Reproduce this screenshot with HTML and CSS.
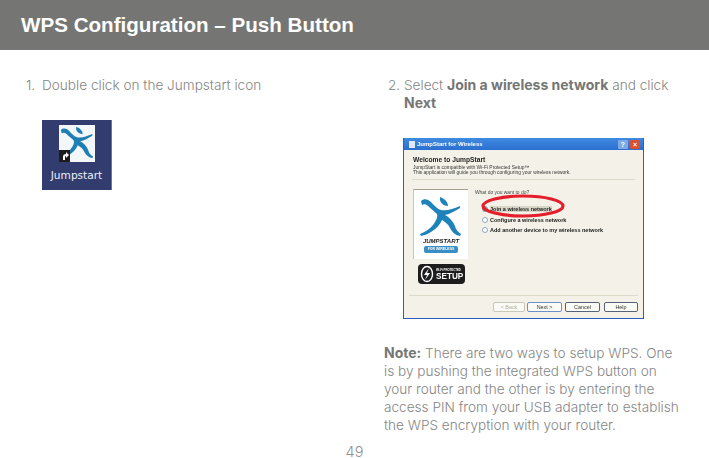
FILE: index.html
```html
<!DOCTYPE html>
<html lang="en">
<head>
    <meta charset="UTF-8">
    <title>WPS Configuration - Push Button</title>
    <link rel="stylesheet" href="styles.css">
</head>
<body>
    <svg class="defs" width="0" height="0">
        <symbol id="runner" viewBox="0 0 42 41">
            <path d="M20 1C23 2 28 5 28 10C24 10 19 7 20 1Z"/>
            <path d="M1 5C4 2 8 3 11 6C14 9 17 13 21 14C27 15 33 13 40 10L40 12C35 15 30 18 25 19C29 21 33 25 35 30C36 34 38 36 41 38L40 40C35 39 32 36 30 32C28 28 25 26 22 24C20 29 16 33 11 36C8 38 5 39 1 40L0 38C5 36 10 33 13 29C16 25 18 21 17 18C14 15 11 13 8 10C6 8 4 8 2 9Z"/>
        </symbol>
    </svg>

    <header class="title-bar">
        <h1>WPS Configuration – Push Button</h1>
    </header>

    <main class="columns">
        <section class="col-left">
            <p class="step"><span class="num">1.</span><span>Double click on the Jumpstart icon</span></p>
            <div class="desktop-icon">
                <div class="icon-box">
                    <svg class="runner-small"><use href="#runner"/></svg>
                    <span class="shortcut">
                        <svg viewBox="0 0 10 10" width="10" height="10"><path d="M3 9V6c0-2 1-3 3-3V1l3 3-3 3V5C5 5 5 6 5 9z" fill="#fff"/></svg>
                    </span>
                </div>
                <span class="icon-label">Jumpstart</span>
            </div>
        </section>

        <section class="col-right">
            <p class="step step-two"><span class="num">2.</span><span>Select <b>Join a wireless network</b> and click<br><b>Next</b></span></p>

            <div class="dialog">
                <div class="dlg-title">
                    <span class="dlg-logo"></span>
                    <span class="dlg-name">JumpStart for Wireless</span>
                    <span class="dlg-help">?</span>
                    <span class="dlg-close">×</span>
                </div>
                <div class="dlg-top">
                    <strong>Welcome to JumpStart</strong>
                    <span>JumpStart is compatible with Wi-Fi Protected Setup™</span>
                    <span>This application will guide you through configuring your wireless network.</span>
                </div>
                <div class="dlg-middle">
                    <div class="dlg-side">
                        <div class="dlg-brand">
                            <svg class="runner-big"><use href="#runner"/></svg>
                            <span class="brand-name">JUMPSTART</span>
                            <span class="brand-tag">FOR WIRELESS</span>
                        </div>
                        <div class="setup-badge">
                            <svg class="setup-disc" viewBox="0 0 14 18" width="14" height="18">
                                <ellipse cx="7" cy="9" rx="5.5" ry="7.5" fill="none" stroke="#fff" stroke-width="1.4"/>
                                <path d="M9 3L4 10H7L5 15L10 8H7Z" fill="#fff"/>
                            </svg>
                            <span class="setup-text"><small>Wi-Fi PROTECTED</small>SETUP</span>
                        </div>
                    </div>
                    <div class="dlg-options">
                        <span class="dlg-question">What do you want to do?</span>
                        <label class="opt opt-on"><i></i><em>Join a wireless network</em></label>
                        <label class="opt"><i></i><em>Configure a wireless network</em></label>
                        <label class="opt"><i></i><em>Add another device to my wireless network</em></label>
                    </div>
                </div>
                <div class="dlg-buttons">
                    <span class="btn btn-off">&lt; Back</span>
                    <span class="btn btn-on">Next &gt;</span>
                    <span class="btn">Cancel</span>
                    <span class="btn">Help</span>
                </div>
                <svg class="red-ring" width="90" height="28" viewBox="0 0 90 28"><ellipse cx="45" cy="14" rx="40" ry="10" fill="none" stroke="#e41e2b" stroke-width="3.2"/></svg>
            </div>

            <p class="note"><b>Note:</b> There are two ways to setup WPS. One is by pushing the integrated WPS button on your router and the other is by entering the access PIN from your USB adapter to establish the WPS encryption with your router.</p>
        </section>
    </main>

    <footer class="page-num">49</footer>
</body>
</html>
```

FILE: styles.css
```css
html, body {
    margin: 0;
    padding: 0;
}

body {
    width: 709px;
    height: 458px;
    overflow: hidden;
    background-color: #fff;
    color: #858685;
    font-family: Inter, "Liberation Sans", Arial, sans-serif;
    font-weight: 300;
    font-size: 13.6px;
    display: flex;
    flex-direction: column;
}

.defs {
    position: absolute;
}

.title-bar {
    height: 50px;
    flex: none;
    background-color: #757674;
    display: flex;
    align-items: center;
    padding-left: 21px;
}

.title-bar h1 {
    margin: 0;
    color: #fff;
    font-family: "Liberation Sans", Arial, sans-serif;
    font-size: 20.6px;
    font-weight: bold;
}

.columns {
    flex: 1;
    display: flex;
}

.col-left {
    width: 384px;
    flex: none;
    padding: 27px 0 0 26px;
    box-sizing: border-box;
}

.col-right {
    flex: 1;
    padding-top: 27px;
    padding-right: 26px;
}

p {
    margin: 0;
}

b {
    color: #757674;
    font-weight: 700;
    font-size: 14px;
    line-height: 1;
}

.step {
    display: flex;
    line-height: 17.6px;
}

.num {
    width: 16px;
    flex: none;
}

.step-two {
    padding-left: 4px;
}

/* jumpstart shortcut on the desktop */
.desktop-icon {
    width: 70px;
    height: 70px;
    margin: 25px 0 0 16px;
    background-color: #323c6f;
    border-right: 1px solid #6d7390;
    box-sizing: border-box;
    display: flex;
    flex-direction: column;
    align-items: center;
    padding-top: 5px;
}

.icon-box {
    width: 36px;
    height: 37px;
    background-color: #f4f7f8;
    position: relative;
    margin-right: -1px;
    padding: 1px 0 0 1px;
    box-sizing: border-box;
}

.runner-small {
    display: block;
    width: 34px;
    height: 33px;
    fill: #1f7fb4;
}

.shortcut {
    position: absolute;
    left: 0;
    bottom: 0;
    width: 11px;
    height: 12px;
    background-color: #1c1c1c;
    display: flex;
    align-items: center;
    justify-content: center;
}

.icon-label {
    color: #eef0f6;
    font-family: "DejaVu Sans", sans-serif;
    font-weight: 400;
    font-size: 10.6px;
    margin-top: 7px;
}

/* wizard window screenshot */
.dialog {
    width: 241px;
    height: 181px;
    margin: 26px 0 0 19px;
    box-sizing: border-box;
    border: 1px solid #2a5fc0;
    border-top: none;
    background-color: #f4f2e8;
    position: relative;
    display: flex;
    flex-direction: column;
    color: #333;
    font-family: "Liberation Sans", Arial, sans-serif;
    font-weight: 400;
    font-size: 4.9px;
    filter: blur(0.45px);
}

.dlg-title {
    height: 12px;
    flex: none;
    background: linear-gradient(#3f8be0, #2a6fd0);
    color: #fff;
    font-size: 6px;
    font-weight: bold;
    display: flex;
    align-items: center;
    padding: 0 3px 0 5px;
    gap: 2px;
}

.dlg-logo {
    width: 6px;
    height: 7px;
    background-color: #dfe9f7;
}

.dlg-name {
    flex: 1;
}

.dlg-help,
.dlg-close {
    width: 10px;
    height: 9px;
    text-align: center;
    line-height: 9px;
    font-size: 7px;
    border-radius: 1px;
    background-color: #7fa9e6;
}

.dlg-close {
    background-color: #d9512f;
}

.dlg-top {
    height: 30px;
    flex: none;
    margin: 0 8px;
    padding: 6px 0 0 1px;
    box-sizing: border-box;
    border-bottom: 1px solid #dedbcc;
    display: flex;
    flex-direction: column;
    line-height: 5px;
}

.dlg-top strong {
    font-size: 6.7px;
    line-height: 7px;
    margin-bottom: 2px;
    color: #222;
}

.dlg-middle {
    flex: 1;
    display: flex;
    padding: 9px 0 0 9px;
}

.dlg-side {
    width: 55px;
    flex: none;
}

.dlg-brand {
    height: 70px;
    background-color: #fff;
    border-top: 1px solid #a5a292;
    border-left: 1px solid #c9c6b6;
    box-sizing: border-box;
    display: flex;
    flex-direction: column;
    align-items: center;
    padding-top: 6px;
}

.runner-big {
    width: 42px;
    height: 41px;
    flex: none;
    fill: #1f83bb;
}

.brand-name {
    font-size: 6px;
    font-weight: bold;
    font-style: italic;
    color: #222;
    line-height: 7px;
    margin-top: 1px;
}

.brand-tag {
    background-color: #3a8ec4;
    color: #fff;
    font-size: 3.5px;
    font-weight: bold;
    line-height: 7px;
    padding: 0 4px;
    border-radius: 2px;
    margin-top: 1px;
}

.setup-badge {
    width: 47px;
    height: 20px;
    margin: 5px 0 0 5px;
    background-color: #1d1d1d;
    border-radius: 4px;
    color: #fff;
    display: flex;
    align-items: center;
    gap: 2px;
    padding-left: 2px;
    box-sizing: border-box;
}

.setup-disc {
    flex: none;
}

.setup-text {
    display: flex;
    flex-direction: column;
    font-size: 8.2px;
    line-height: 9px;
    font-weight: bold;
}

.setup-text small {
    font-size: 2.8px;
    line-height: 4px;
}

.dlg-options {
    flex: 1;
    display: flex;
    flex-direction: column;
    padding: 1px 0 0 7px;
}

.dlg-question {
    line-height: 6px;
    margin-bottom: 8px;
    color: #444;
}

.opt {
    display: flex;
    align-items: center;
    gap: 2px;
    height: 10.5px;
    padding-left: 7px;
    font-size: 5.5px;
    font-weight: bold;
    color: #222;
    white-space: nowrap;
}

.opt em {
    font-style: normal;
}

.opt i {
    width: 6px;
    height: 6px;
    flex: none;
    border-radius: 50%;
    background-color: #fff;
    border: 1px solid #8da6c2;
    box-sizing: border-box;
}

.opt-on i {
    background-color: #3f9a6e;
}

.opt-on em {
    background-color: #d8d6c8;
}

.dlg-buttons {
    height: 23px;
    flex: none;
    margin: 0 5px;
    border-top: 1px solid #dedbcc;
    box-sizing: border-box;
    display: flex;
    justify-content: flex-end;
    align-items: flex-start;
    padding-top: 6px;
    gap: 3px;
}

.btn {
    width: 34px;
    height: 10px;
    border: 1px solid #54627c;
    border-radius: 2px;
    background-color: #fbfbf6;
    box-sizing: border-box;
    text-align: center;
    line-height: 8px;
    font-size: 5.4px;
}

.btn-off {
    width: 32px;
    border-color: #c9c7b8;
    color: #b0ae9f;
    margin-right: -1px;
}

.btn-on {
    width: 35px;
    border-color: #6f8fc9;
    border-width: 1.5px;
}

.btn-on + .btn {
    width: 35px;
    margin-right: 1px;
}

.red-ring {
    position: absolute;
    left: 74px;
    top: 54px;
}

.note {
    margin: 25px 0 0 0;
    line-height: 18px;
}

.page-num {
    flex: none;
    height: 13px;
    line-height: 13px;
    text-align: center;
    font-size: 14.5px;
    color: #8f908f;
}
```
